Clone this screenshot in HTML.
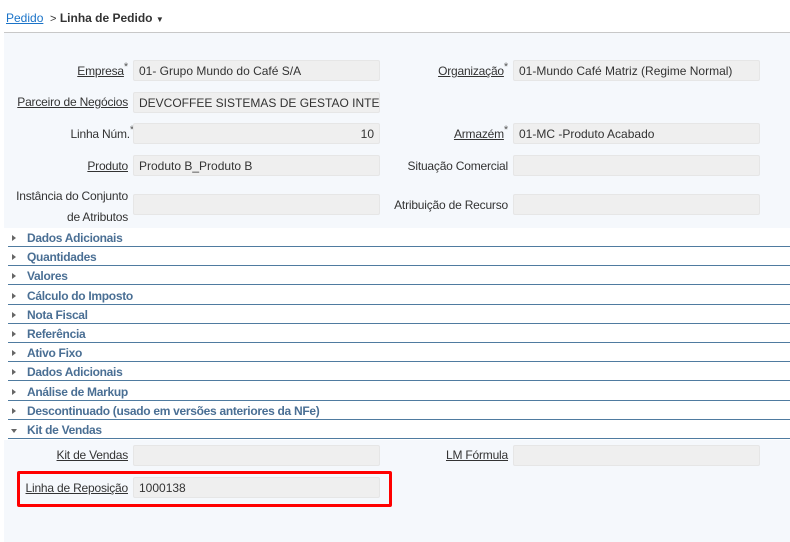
<!DOCTYPE html>
<html><head><meta charset="utf-8"><style>
*{margin:0;padding:0;box-sizing:border-box}
body{width:790px;height:542px;background:#fff;font-family:"Liberation Sans",sans-serif;font-size:12px;color:#333;position:relative;overflow:hidden}
.a{position:absolute;white-space:nowrap}
.l{position:absolute;text-align:right;white-space:nowrap;color:#333;letter-spacing:-0.2px}
.u{text-decoration:underline}
.in{position:absolute;background:#efefef;border:1px solid #e6e6e6;border-radius:2px;height:21px;padding:3px 5px;white-space:nowrap;overflow:hidden;color:#333}
.st{font-size:11px;vertical-align:top;color:#555;position:relative;top:-3px}
.sec{position:absolute;left:8px;width:782px;height:19px;border-bottom:1px solid #4f7ba0;font-weight:bold;color:#4a6f94;padding:3px 0 0 19px;font-size:12px;letter-spacing:-0.3px}
.sec:before{content:"";position:absolute;left:4px;top:7px;border-left:4px solid #666;border-top:3px solid transparent;border-bottom:3px solid transparent}
.sec.o:before{left:3px;top:9px;border-top:4px solid #666;border-left:3px solid transparent;border-right:3px solid transparent;border-bottom:0}
</style></head><body>
<div class="a" style="left:6px;top:11px;"><span class="u" style="color:#1a73c8">Pedido</span> &nbsp;<span style="font-size:11px">&gt;</span> <b>Linha de Pedido</b> <span style="font-size:8px">▼</span></div>
<div class="a" style="left:4px;top:32px;width:786px;height:1px;background:#c8c8c8"></div>
<div class="a" style="left:4px;top:33px;width:786px;height:195px;background:#f5f8fc"></div>

<div class="l" style="right:662px;top:64px"><span class="u">Empresa</span><span class="st">*</span></div>
<div class="in" style="left:133px;top:60px;width:247px">01- Grupo Mundo do Café S/A</div>
<div class="l" style="right:282px;top:64px"><span class="u">Organização</span><span class="st">*</span></div>
<div class="in" style="left:513px;top:60px;width:247px">01-Mundo Café Matriz (Regime Normal)</div>

<div class="l" style="right:662px;top:95px"><span class="u">Parceiro de Negócios</span></div>
<div class="in" style="left:133px;top:92px;width:247px">DEVCOFFEE SISTEMAS DE GESTAO INTEGRADA</div>

<div class="l" style="right:656px;top:127px">Linha Núm.<span class="st">*</span></div>
<div class="in" style="left:133px;top:123px;width:247px;text-align:right">10</div>
<div class="l" style="right:282px;top:127px"><span class="u">Armazém</span><span class="st">*</span></div>
<div class="in" style="left:513px;top:123px;width:247px">01-MC -Produto Acabado</div>

<div class="l" style="right:662px;top:159px"><span class="u">Produto</span></div>
<div class="in" style="left:133px;top:155px;width:247px">Produto B_Produto B</div>
<div class="l" style="right:282px;top:159px">Situação Comercial</div>
<div class="in" style="left:513px;top:155px;width:247px"></div>

<div class="l" style="right:662px;top:186px;line-height:21px">Instância do Conjunto<br>de Atributos</div>
<div class="in" style="left:133px;top:194px;width:247px"></div>
<div class="l" style="right:282px;top:198px">Atribuição de Recurso</div>
<div class="in" style="left:513px;top:194px;width:247px"></div>

<div class="sec" style="top:228px">Dados Adicionais</div>
<div class="sec" style="top:247px">Quantidades</div>
<div class="sec" style="top:266px">Valores</div>
<div class="sec" style="top:286px">Cálculo do Imposto</div>
<div class="sec" style="top:305px">Nota Fiscal</div>
<div class="sec" style="top:324px">Referência</div>
<div class="sec" style="top:343px">Ativo Fixo</div>
<div class="sec" style="top:362px">Dados Adicionais</div>
<div class="sec" style="top:382px">Análise de Markup</div>
<div class="sec" style="top:401px">Descontinuado (usado em versões anteriores da NFe)</div>
<div class="sec o" style="top:420px">Kit de Vendas</div>

<div class="a" style="left:4px;top:440px;width:786px;height:102px;background:#f5f8fc"></div>
<div class="l" style="right:662px;top:448px"><span class="u">Kit de Vendas</span></div>
<div class="in" style="left:133px;top:445px;width:247px"></div>
<div class="l" style="right:282px;top:448px"><span class="u">LM Fórmula</span></div>
<div class="in" style="left:513px;top:445px;width:247px"></div>
<div class="l" style="right:662px;top:481px"><span class="u">Linha de Reposição</span></div>
<div class="in" style="left:133px;top:477px;width:247px">1000138</div>
<div class="a" style="left:17px;top:471px;width:375px;height:36px;border:3px solid #f00;border-radius:2px"></div>
</body></html>
